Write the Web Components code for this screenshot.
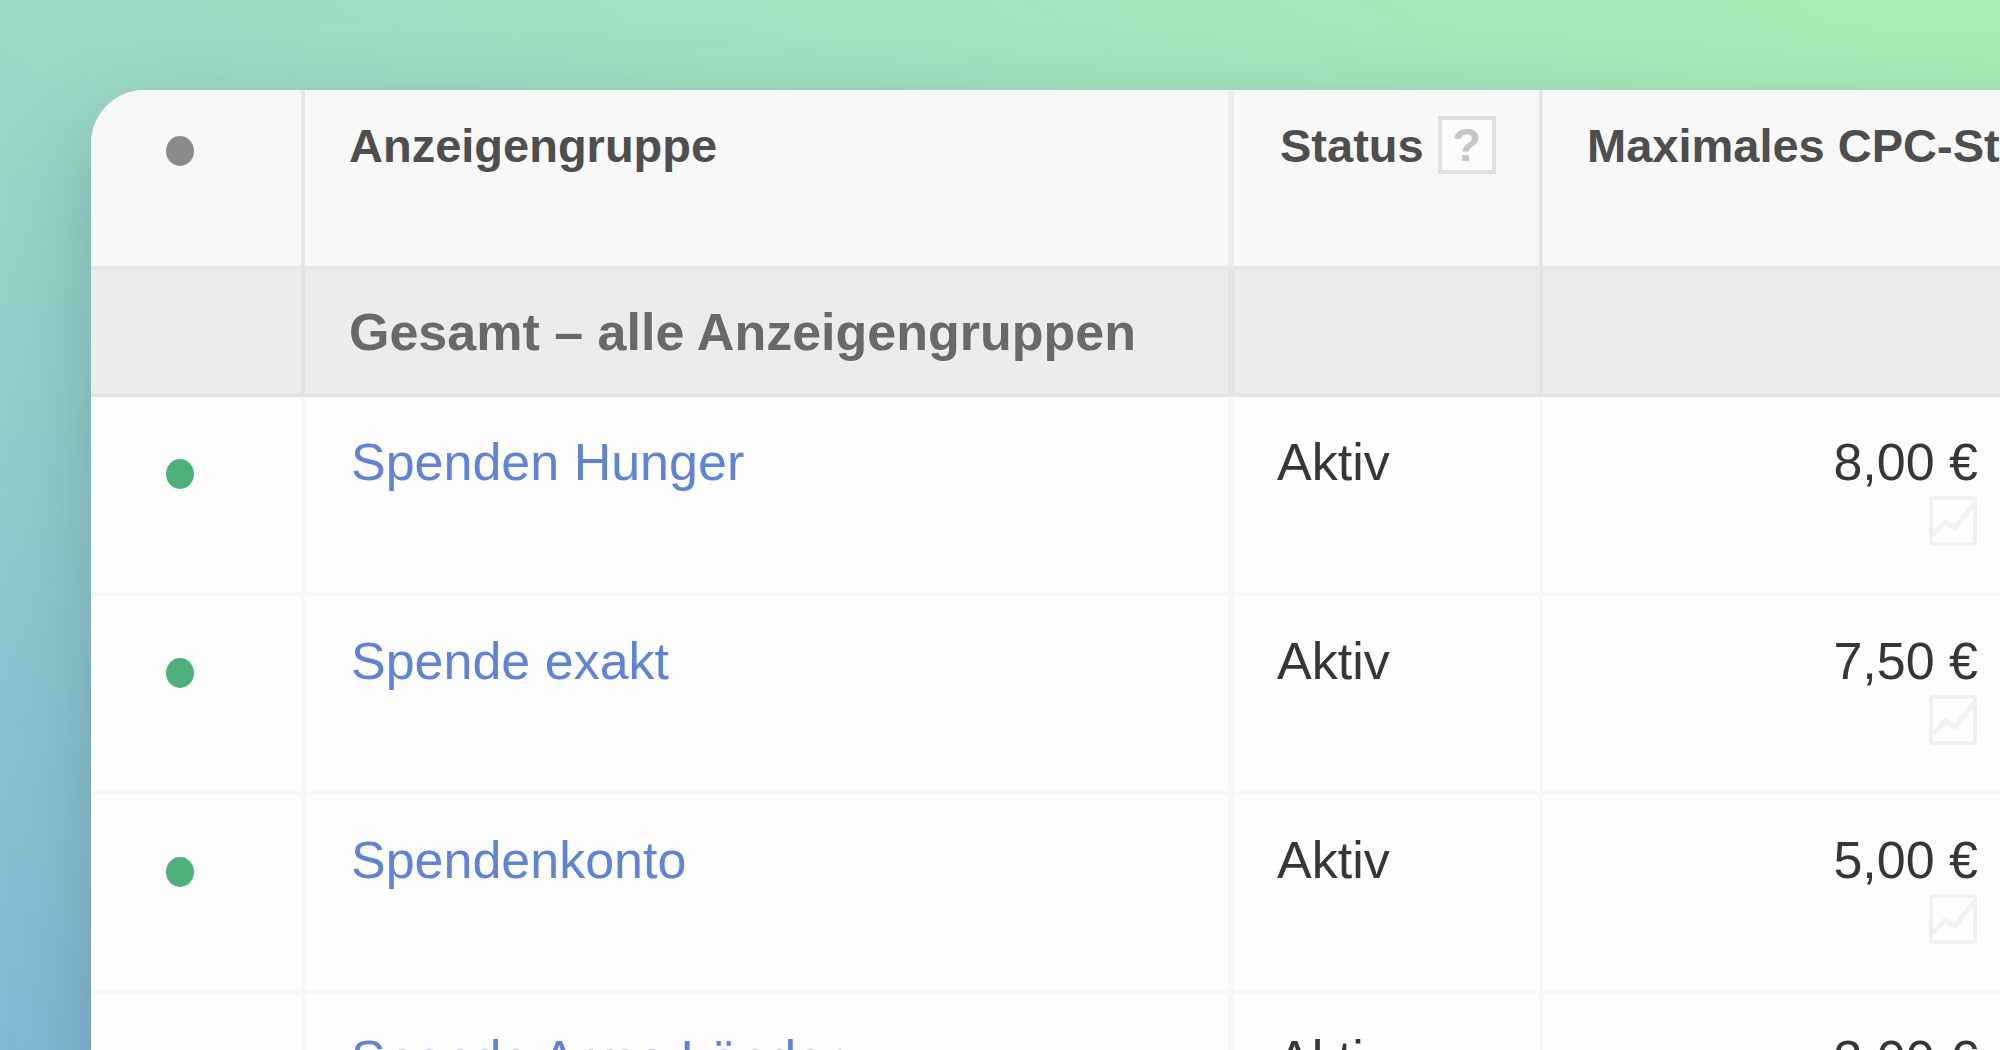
<!DOCTYPE html>
<html lang="de">
<head>
<meta charset="utf-8">
<title>Anzeigengruppen</title>
<style>
  html, body {
    margin: 0;
    height: 100%;
  }
  body {
    overflow: hidden;
    font-family: 'Liberation Sans', Arial, sans-serif;
  }
</style>
</head>
<body>
<gradient-stage>
  <ad-group-table></ad-group-table>
</gradient-stage>

<script>
// Hintergrund mit Verlauf, die Karte kommt in den Slot
class GradientStage extends HTMLElement {
    constructor() {
        super();
        this.attachShadow({ mode: 'open' });
        this.shadowRoot.innerHTML = `
            <style>
                :host {
                    display: block;
                    box-sizing: border-box;
                    height: 100%;
                    overflow: hidden;
                    padding: 90px 0 0 91px;
                    background: linear-gradient(30deg, #82b8d5 0%, #9bdac6 46%, #abedb5 100%);
                }
                /* Der Schatten laeuft rechts ueber den Rand hinaus */
                .shadow {
                    margin-right: -160px;
                    padding-right: 160px;
                    border-radius: 54px 0 0 0;
                    box-shadow: 0 32px 88px rgba(50, 70, 90, 0.3);
                }
                .card {
                    border-radius: 54px 0 0 0;
                    overflow: hidden;
                    background: #fefefe;
                }
            </style>
            <div class="shadow">
                <div class="card"><slot></slot></div>
            </div>
        `;
    }
}

// Statuspunkt: grau im Tabellenkopf, gruen bei aktiven Gruppen
class StatusDot extends HTMLElement {
    constructor() {
        super();
        this.attachShadow({ mode: 'open' });
        this.shadowRoot.innerHTML = `
            <style>
                :host {
                    display: block;
                    width: 28px;
                    height: 30px;
                    border-radius: 50%;
                    background: #8b8b8b;
                }
                :host([active]) {
                    background: #4db07a;
                }
            </style>
        `;
    }
}

class HelpButton extends HTMLElement {
    constructor() {
        super();
        this.attachShadow({ mode: 'open' });
        this.shadowRoot.innerHTML = `
            <style>
                :host {
                    display: block;
                }
                button {
                    display: block;
                    box-sizing: border-box;
                    width: 58px;
                    height: 58px;
                    padding: 0;
                    border: 4px solid #e0e0e0;
                    background: #fbfbfb;
                    color: #c6c6c6;
                    font: bold 47px/50px 'Liberation Sans', Arial, sans-serif;
                    text-align: center;
                }
            </style>
            <button type="button"><slot></slot></button>
        `;
    }
}

// Kleine Schaltflaeche fuer die Gebotssimulation
class TrendButton extends HTMLElement {
    constructor() {
        super();
        this.attachShadow({ mode: 'open' });
        this.shadowRoot.innerHTML = `
            <style>
                :host {
                    display: block;
                }
                button {
                    display: block;
                    padding: 0;
                    border: 0;
                    background: none;
                }
                svg {
                    display: block;
                    width: 50px;
                    height: 50px;
                }
            </style>
            <button type="button" aria-label="Gebotssimulator">
                <svg viewBox="0 0 50 50" fill="none">
                    <rect x="3" y="2" width="44" height="46" rx="2" stroke="#f0f0f0" stroke-width="4"/>
                    <path d="M5 39 L17 26 L27 32 L46 8" stroke="#f2f2f2" stroke-width="5"/>
                </svg>
            </button>
        `;
    }
}

class AdGroupTable extends HTMLElement {
    constructor() {
        super();
        this.attachShadow({ mode: 'open' });
        this.groups = [
            { name: 'Spenden Hunger', status: 'Aktiv', bid: '8,00 €' },
            { name: 'Spende exakt', status: 'Aktiv', bid: '7,50 €' },
            { name: 'Spendenkonto', status: 'Aktiv', bid: '5,00 €' },
            { name: 'Spende Arme Länder', status: 'Aktiv', bid: '3,00 €' }
        ];
    }

    renderRow(group) {
        return `
            <tr>
                <td><status-dot active></status-dot></td>
                <td><a href="#">${group.name}</a></td>
                <td>${group.status}</td>
                <td>
                    <div class="bid">
                        <span>${group.bid}</span>
                        <trend-button></trend-button>
                    </div>
                </td>
            </tr>
        `;
    }

    render() {
        this.shadowRoot.innerHTML = `
            <style>
                :host {
                    display: block;
                }
                table {
                    width: 100%;
                    table-layout: fixed;
                    border-collapse: separate;
                    border-spacing: 0;
                }
                .col-dot { width: 214px; }
                .col-name { width: 929px; }
                .col-status { width: 309px; }
                th, td {
                    box-sizing: border-box;
                    padding: 35px 22px 0 46px;
                    border-right: 4px solid #f7f7f7;
                    border-bottom: 4px solid #f8f8f8;
                    font-size: 52px;
                    line-height: 60px;
                    text-align: left;
                    vertical-align: top;
                    white-space: nowrap;
                    overflow: hidden;
                    color: #363636;
                }
                td:nth-child(n+3) {
                    padding-left: 43px;
                }
                tbody td {
                    height: 199px;
                }
                tbody status-dot {
                    margin-top: 27px;
                }
                thead th {
                    padding-top: 26px;
                    padding-left: 44px;
                    border-color: #e6e6e6;
                    background: #f8f8f8;
                    font-size: 47px;
                    color: #4e4e4e;
                }
                .head th {
                    height: 180px;
                }
                .head status-dot {
                    margin-top: 20px;
                }
                .total th {
                    height: 127px;
                    padding-top: 32px;
                    border-color: #e3e3e3;
                    background: #ececec;
                    font-size: 52px;
                    color: #696969;
                }
                th:nth-child(2), td:nth-child(2) {
                    border-right-width: 6px;
                }
                .head th:nth-child(2) {
                    border-right-color: #ececec;
                }
                .head th:nth-child(3) {
                    padding-left: 46px;
                }
                tr > :last-child {
                    border-right: 0;
                }
                .head th:last-child {
                    padding-right: 0;
                }
                tr > :first-child {
                    padding-left: 75px;
                }
                .label {
                    display: flex;
                    gap: 14px;
                }
                .bid {
                    display: flex;
                    flex-direction: column;
                    align-items: flex-end;
                    gap: 4px;
                }
                a {
                    color: #6083d8;
                    text-decoration: none;
                }
            </style>
            <table>
                <colgroup>
                    <col class="col-dot">
                    <col class="col-name">
                    <col class="col-status">
                    <col>
                </colgroup>
                <thead>
                    <tr class="head">
                        <th><status-dot></status-dot></th>
                        <th>Anzeigengruppe</th>
                        <th><div class="label">Status <help-button>?</help-button></div></th>
                        <th>Maximales CPC-St</th>
                    </tr>
                    <tr class="total">
                        <th></th>
                        <th>Gesamt – alle Anzeigengruppen</th>
                        <th></th>
                        <th></th>
                    </tr>
                </thead>
                <tbody>
                    ${this.groups.map(group => this.renderRow(group)).join('')}
                </tbody>
            </table>
        `;
    }

    connectedCallback() {
        this.render();
    }
}

customElements.define('gradient-stage', GradientStage);
customElements.define('status-dot', StatusDot);
customElements.define('help-button', HelpButton);
customElements.define('trend-button', TrendButton);
customElements.define('ad-group-table', AdGroupTable);
</script>
</body>
</html>
